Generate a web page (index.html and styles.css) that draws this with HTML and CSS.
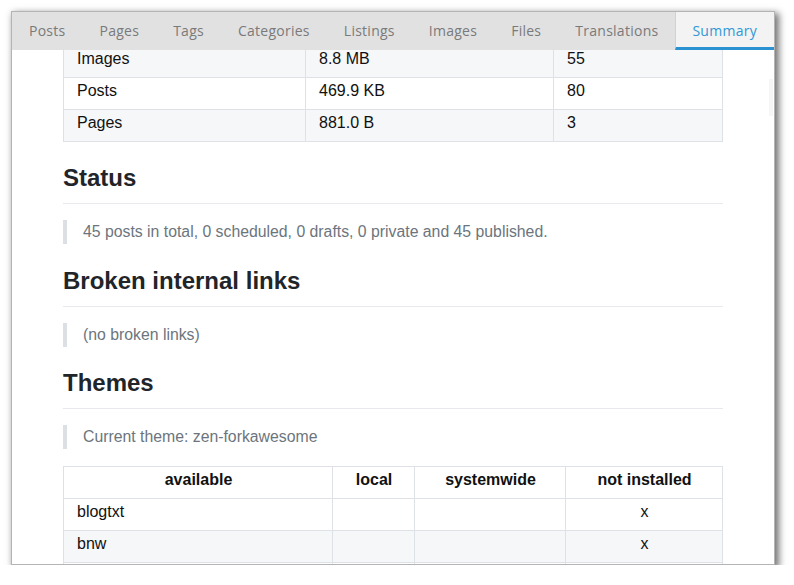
FILE: index.html
```html
<!DOCTYPE html>
<html lang="en">
<head>
<meta charset="utf-8">
<title>Summary</title>
<link rel="stylesheet" href="styles.css">
</head>
<body>
<div class="window">
  <nav class="tabs">
    <div class="tab">Posts</div>
    <div class="tab">Pages</div>
    <div class="tab">Tags</div>
    <div class="tab">Categories</div>
    <div class="tab">Listings</div>
    <div class="tab">Images</div>
    <div class="tab">Files</div>
    <div class="tab">Translations</div>
    <div class="tab active">Summary</div>
  </nav>
  <main class="content">
    <table class="grid sizes">
      <colgroup>
        <col class="c1"><col class="c2"><col class="c3">
      </colgroup>
      <tbody>
        <tr class="stripe"><td>Images</td><td>8.8 MB</td><td>55</td></tr>
        <tr><td>Posts</td><td>469.9 KB</td><td>80</td></tr>
        <tr class="stripe"><td>Pages</td><td>881.0 B</td><td>3</td></tr>
      </tbody>
    </table>

    <h2 class="heading">Status</h2>
    <blockquote class="note">45 posts in total, 0 scheduled, 0 drafts, 0 private and 45 published.</blockquote>

    <h2 class="heading">Broken internal links</h2>
    <blockquote class="note">(no broken links)</blockquote>

    <h2 class="heading">Themes</h2>
    <blockquote class="note">Current theme: zen-forkawesome</blockquote>

    <table class="grid themes">
      <colgroup>
        <col class="t1"><col class="t2"><col class="t3"><col class="t4">
      </colgroup>
      <thead>
        <tr><th>available</th><th>local</th><th>systemwide</th><th>not installed</th></tr>
      </thead>
      <tbody>
        <tr><td>blogtxt</td><td></td><td></td><td class="mark">x</td></tr>
        <tr class="stripe"><td>bnw</td><td></td><td></td><td class="mark">x</td></tr>
        <tr><td>&nbsp;</td><td></td><td></td><td></td></tr>
      </tbody>
    </table>
  </main>
  <div class="scroll-thumb"></div>
</div>
</body>
</html>
```
FILE: styles.css
```css
html, body {
  margin: 0;
  padding: 0;
  background: #ffffff;
}

.window {
  position: relative;
  margin: 11px 0 0 11px;
  width: 762px;
  height: 552px;
  border: 1px solid #b4b4b4;
  background: #ffffff;
  box-shadow: 3px 3px 7px 1px rgba(0, 0, 0, 0.55);
  display: flex;
  flex-direction: column;
  overflow: hidden;
}

.tabs {
  display: flex;
  height: 38px;
  flex: none;
  background: #e1e1e1;
  font-family: "Open Sans", "DejaVu Sans", sans-serif;
  font-size: 14px;
  letter-spacing: 0.26px;
  color: #7a7a7a;
}

.tab {
  padding: 0 17px;
  line-height: 38px;
  white-space: nowrap;
}

.tab.active {
  flex: 1;
  box-sizing: border-box;
  height: 38px;
  border-left: 1px solid #d2d2d2;
  border-bottom: 3px solid #2a92d0;
  line-height: 38px;
  padding: 0 16px;
  background: #f3f3f3;
  color: #2f98d6;
}

.content {
  flex: 1;
  overflow: hidden;
  padding: 0 51px 0 51px;
  font-family: "Liberation Sans", Arial, sans-serif;
  font-size: 16px;
  color: #212529;
}

.grid {
  border-collapse: collapse;
  table-layout: fixed;
  width: 659px;
}

.grid td,
.grid th {
  border: 1px solid #dee2e6;
  padding: 1px 12px 6px 13px;
  line-height: 24px;
  text-align: left;
  color: #111111;
}

.grid th {
  font-weight: 700;
  text-align: center;
}

.grid .stripe td {
  background: #f6f7f9;
}

.grid .mark {
  text-align: center;
}

.sizes {
  margin-top: -5px;
}

.sizes .c1 { width: 242px; }
.sizes .c2 { width: 248px; }
.sizes .c3 { width: 169px; }

.themes {
  margin-top: 17px;
}

.themes .t1 { width: 269px; }
.themes .t2 { width: 82px; }
.themes .t3 { width: 151px; }
.themes .t4 { width: 157px; }

.heading {
  margin: 22.5px 0 16px;
  padding-bottom: 11px;
  border-bottom: 1px solid #e7e9ec;
  font-size: 24px;
  font-weight: 700;
  line-height: 28px;
  color: #212529;
}

.sizes + .heading {
  margin-top: 22px;
}

.note {
  margin: 0 0 16px;
  padding: 0 0 0 16px;
  border-left: 4px solid #dcdfe3;
  font-size: 15.8px;
  line-height: 24px;
  color: #6c757d;
}

.scroll-thumb {
  position: absolute;
  right: 1px;
  top: 67px;
  width: 4px;
  height: 37px;
  background: #f6f6f6;
}
```
